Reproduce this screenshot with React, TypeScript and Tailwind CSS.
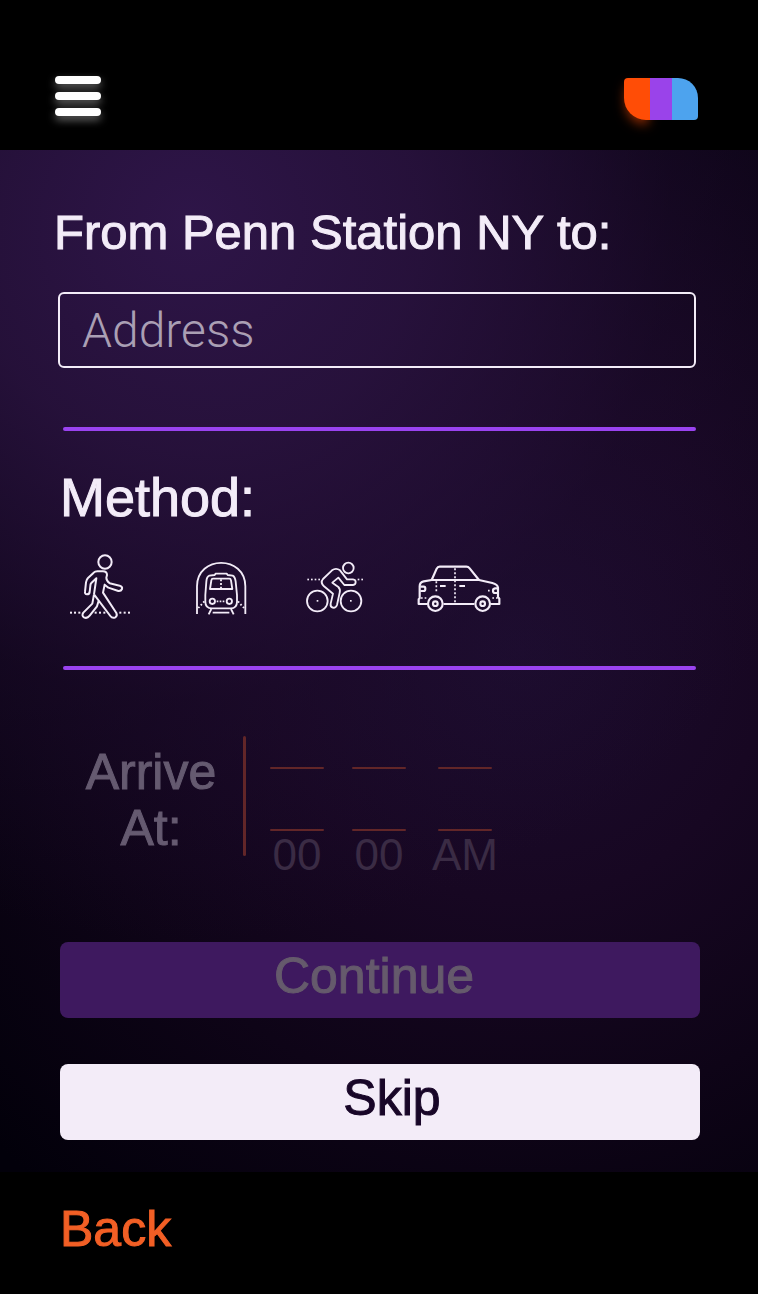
import React from "react";

const heading = "font-normal [-webkit-text-stroke:1px_currentColor]";

function WalkIcon() {
  return (
    <svg viewBox="42 24 219 204" className="h-[68px] w-[73px]" fill="none" stroke="currentColor" strokeWidth="6" strokeLinejoin="round" aria-hidden="true">
      <circle cx="150" cy="51" r="20" />
      <path d="M117 148 L124 100 L109 114 Q106 117 106 123 L104 141 Q103 148 96 148 Q89 147 90 140 L93 112 Q94 104 99 99 L116 83 Q120 79 127 79 H144 Q156 79 156 90 L154 98 Q154 107 164 115 L194 122 Q203 125 201 132 Q198 139 190 138 L160 128 L149 119 L144 143 L184 204 Q188 213 181 217 Q172 221 166 213 L117 148 L112 176 L85 203 Q79 212 87 217 Q96 222 104 212 L126 184 L131 167" />
      <g fill="currentColor" stroke="none">
        {[45, 57, 70, 119, 132, 145, 193, 206, 219].map((x) => (
          <rect key={x} x={x} y="200" width="6" height="6" />
        ))}
      </g>
    </svg>
  );
}

function TrainIcon() {
  return (
    <svg viewBox="45 24 174 204" className="h-[68px] w-[58px]" fill="none" stroke="currentColor" strokeWidth="5.5" strokeLinejoin="round" aria-hidden="true">
      <path d="M51 207 V124 C51 30 196 30 196 124 V207" />
      <path d="M88 92 L104 90 L107 86 H140 L143 90 L158 92 Q165 95 167 110 L171 150 V170 Q171 190 152 190 H96 Q76 190 76 170 V150 L79 110 Q80 95 88 92 Z" />
      <path d="M99 101 H148 Q152 101 153 106 L157 132 H90 L94 106 Q95 101 99 101 Z" />
      <path d="M123 103 V132" strokeDasharray="6 5" />
      <circle cx="97" cy="169" r="8" />
      <circle cx="148" cy="169" r="8" />
      <path d="M94 192 L86 208 M153 192 L161 208 M98 203 H148" />
      <path d="M110 169 H136" strokeDasharray="5 4" />
      <path d="M73 169 L54 190 M174 169 L193 190" strokeDasharray="5 6" />
    </svg>
  );
}

function BikeIcon() {
  return (
    <svg viewBox="33 24 174 204" className="h-[68px] w-[58px]" fill="none" stroke="currentColor" strokeWidth="5.5" strokeLinejoin="round" aria-hidden="true">
      <circle cx="67" cy="168" r="31" />
      <circle cx="168" cy="168" r="31" />
      <circle cx="160" cy="69" r="16" />
      <path d="M84 102 L111 76 Q123 67 135 76 L156 103 H174 Q182 104 182 111 Q182 119 174 120 H148 L130 98 L112 113 L130 126 Q137 133 134 143 L126 180 Q122 190 113 188 Q105 185 107 176 L114 146 L87 124 Q75 112 84 102 Z" />
      <g fill="currentColor" stroke="none">
        {[37, 48, 59, 70, 188, 199].map((x) => (
          <rect key={x} x={x} y="101" width="5" height="5" />
        ))}
        <rect x="65" y="165" width="5" height="5" />
        <rect x="165" y="165" width="5" height="5" />
      </g>
    </svg>
  );
}

function CarIcon() {
  return (
    <svg viewBox="36 24 252 204" className="h-[68px] w-[84px]" fill="none" stroke="currentColor" strokeWidth="6.5" strokeLinejoin="round" aria-hidden="true">
      <path d="M80 105 L95 71 Q98 65 104 65 H184 Q190 65 194 70 L222 105 Z" />
      <path d="M80 105 L56 109 Q44 111 44 124 V160 L41 163 V177 H66 M116 177 H208 M258 177 H283 V161 L279 156 V128 Q278 118 262 114 L222 105" />
      <circle cx="91" cy="176" r="22" />
      <circle cx="91" cy="176" r="7" />
      <circle cx="233" cy="176" r="22" />
      <circle cx="233" cy="176" r="7" />
      <path d="M46 125 H56 Q61 125 61 131 Q61 138 56 138 H46 M278 130 H270 Q264 131 264 137 Q264 144 270 144 H278" />
      <path d="M105 123 H122 M163 123 H180" />
      <path d="M150 70 V176" strokeWidth="5" strokeDasharray="6 6" />
      <path d="M94 109 V140" strokeWidth="5" strokeDasharray="6 6" />
      <path d="M48 159 H66 M262 159 H280 M249 137 H254" strokeWidth="5" strokeDasharray="5 6" />
    </svg>
  );
}

function Divider() {
  return <hr className="ml-[63px] mr-[62px] h-1 rounded-full border-0 bg-[#9a43f0]" />;
}

const methods = [
  { name: "Walk", icon: <WalkIcon /> },
  { name: "Train", icon: <TrainIcon /> },
  { name: "Bike", icon: <BikeIcon /> },
  { name: "Car", icon: <CarIcon /> },
];

const timeLine = "h-0.5 w-[54px] rounded-full bg-[#622628]";
const timeField =
  "h-12 w-full appearance-none bg-transparent p-0 text-center text-[44px] leading-12 text-[#3a2b44] opacity-100";

function TimeColumn({ width, children }: { width: string; children: React.ReactNode }) {
  return (
    <div className={`flex flex-col items-center pt-[31px] ${width}`}>
      <div className={timeLine} />
      <div className={`mt-15 ${timeLine}`} />
      {children}
    </div>
  );
}

export default function App() {
  return (
    <div className="flex min-h-screen w-full flex-col bg-black font-['Liberation_Sans',Arial,sans-serif] text-[50px] leading-14 text-[#f3ecf8]">
      <header className="flex items-start justify-between pt-[76px] pr-15 pb-[30px] pl-[55px]">
        <button type="button" aria-label="Menu" className="flex w-[46px] flex-col gap-2 pb-1">
          <span className="h-2 w-full rounded-full bg-white shadow-[0_4px_8px_rgba(255,255,255,0.4)]" />
          <span className="h-2 w-full rounded-full bg-white shadow-[0_4px_8px_rgba(255,255,255,0.4)]" />
          <span className="h-2 w-full rounded-full bg-white shadow-[0_4px_8px_rgba(255,255,255,0.4)]" />
        </button>
        <div className="mt-0.5 flex h-[42px]">
          <span className="w-[26px] rounded-tl-[4px] rounded-bl-[22px] bg-[#ff4d06] shadow-[0_6px_12px_-2px_rgba(255,77,6,0.6)]" />
          <span className="w-[22px] bg-[#9a43ea]" />
          <span className="w-[26px] rounded-tr-[20px] rounded-br-[4px] bg-[#4da3ee]" />
        </div>
      </header>

      <main className="flex-1 bg-[#02000a] bg-[radial-gradient(circle_at_190px_70px,#2e1548_0px,rgba(42,19,64,0.85)_230px,rgba(32,14,50,0.4)_480px,rgba(20,8,32,0)_720px),radial-gradient(circle_at_520px_500px,#1c0c2e_0px,#170722_250px,#0e0417_460px,rgba(2,0,10,0)_720px)] pt-[54px] pb-8">
        <label htmlFor="address" className={`block pl-[54px] text-[49px] leading-14 ${heading}`}>
          From Penn Station NY to:
        </label>
        <div className="mt-8 pr-[62px] pl-[58px]">
          <input
            id="address"
            type="text"
            placeholder="Address"
            className="block h-[76px] w-full rounded-md border-2 border-[#f3ecf8] bg-transparent px-[22px] font-[Roboto,'Liberation_Sans',sans-serif] text-[48px] font-light outline-none placeholder:text-[#aa9fb4] placeholder:opacity-100"
          />
        </div>

        <div className="pt-[59px]">
          <Divider />
        </div>

        <h2 className={`mt-[38px] pl-15 text-[54px] leading-14 ${heading}`}>Method:</h2>
        <div className="mt-7 flex gap-[53px] pl-[69px]">
          {methods.map((m) => (
            <button key={m.name} type="button" aria-label={m.name}>
              {m.icon}
            </button>
          ))}
        </div>

        <div className="pt-[45px]">
          <Divider />
        </div>

        <div className="mt-[66px] flex items-start pl-[84px]">
          <label htmlFor="hour" className={`w-[134px] pt-2 text-center text-[#655a70] ${heading}`}>
            Arrive At:
          </label>
          <div className="ml-[25px] h-30 w-[3px] rounded-full bg-[#622628]" />
          <div className="ml-6 flex">
            <TimeColumn width="w-[54px]">
              <input id="hour" type="text" disabled defaultValue="00" className={timeField} />
            </TimeColumn>
            <div className="w-7" />
            <TimeColumn width="w-[54px]">
              <input aria-label="Minutes" type="text" disabled defaultValue="00" className={timeField} />
            </TimeColumn>
            <div className="w-6" />
            <TimeColumn width="w-[70px]">
              <select aria-label="AM or PM" disabled className={timeField}>
                <option>AM</option>
              </select>
            </TimeColumn>
          </div>
        </div>

        <div className="mt-[63px] flex flex-col gap-[46px] pr-[58px] pl-15">
          <button type="button" disabled className={`h-[76px] w-full rounded-lg bg-[#3e195f] pr-3 pb-2 text-[#655a6c] ${heading}`}>
            Continue
          </button>
          <button type="button" className={`h-[76px] w-full rounded-lg bg-[#f3ecf8] pb-2 pl-6 text-[#180628] ${heading}`}>
            Skip
          </button>
        </div>
      </main>

      <footer className="pt-[29px] pr-[58px] pb-[37px] pl-15">
        <a href="#back" className={`inline-block align-top text-[#f25f25] ${heading}`}>
          Back
        </a>
      </footer>
    </div>
  );
}
